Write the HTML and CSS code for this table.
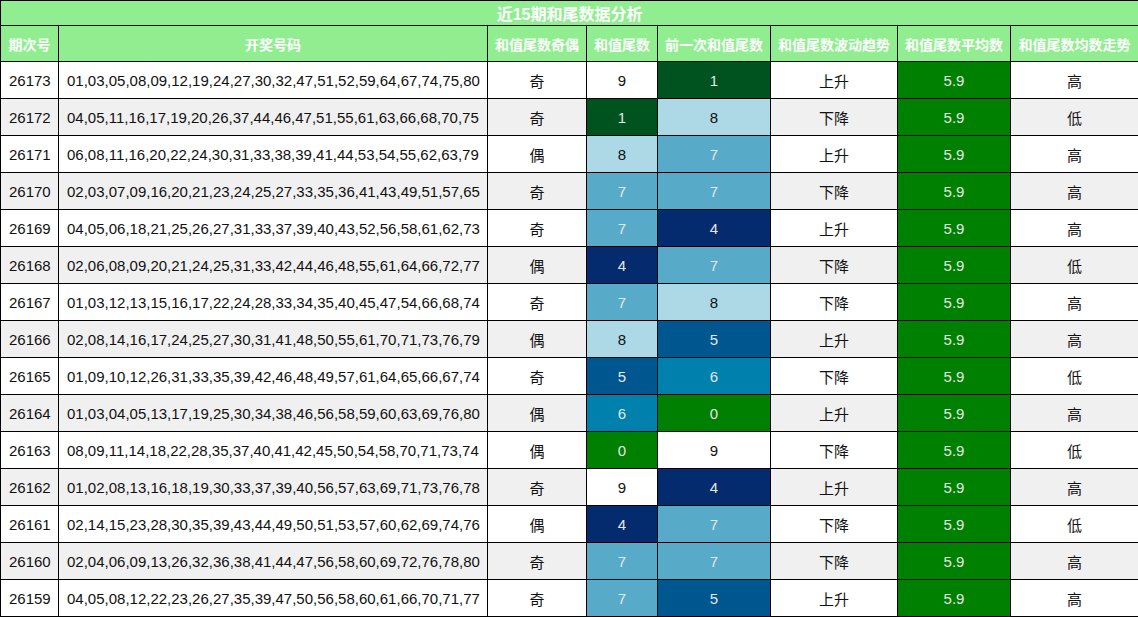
FILE: index.html
```html
<!DOCTYPE html>
<html lang="zh">
<head>
<meta charset="utf-8">
<title>近15期和尾数据分析</title>
<link rel="stylesheet" href="styles.css">
</head>
<body>
<table class="grid">
  <colgroup>
    <col class="c-period"><col class="c-nums"><col class="c-parity"><col class="c-tail"><col class="c-prev"><col class="c-trend"><col class="c-avg"><col class="c-level">
  </colgroup>
  <thead>
    <tr class="title-row"><th colspan="8">近15期和尾数据分析</th></tr>
    <tr class="head-row">
      <th>期次号</th><th>开奖号码</th><th>和值尾数奇偶</th><th>和值尾数</th><th>前一次和值尾数</th><th>和值尾数波动趋势</th><th>和值尾数平均数</th><th>和值尾数均数走势</th>
    </tr>
  </thead>
  <tbody>
    <tr><td class="left">26173</td><td class="left">01,03,05,08,09,12,19,24,27,30,32,47,51,52,59,64,67,74,75,80</td><td>奇</td><td class="d9">9</td><td class="d1">1</td><td>上升</td><td class="avg">5.9</td><td>高</td></tr>
    <tr><td class="left">26172</td><td class="left">04,05,11,16,17,19,20,26,37,44,46,47,51,55,61,63,66,68,70,75</td><td>奇</td><td class="d1">1</td><td class="d8">8</td><td>下降</td><td class="avg">5.9</td><td>低</td></tr>
    <tr><td class="left">26171</td><td class="left">06,08,11,16,20,22,24,30,31,33,38,39,41,44,53,54,55,62,63,79</td><td>偶</td><td class="d8">8</td><td class="d7">7</td><td>上升</td><td class="avg">5.9</td><td>高</td></tr>
    <tr><td class="left">26170</td><td class="left">02,03,07,09,16,20,21,23,24,25,27,33,35,36,41,43,49,51,57,65</td><td>奇</td><td class="d7">7</td><td class="d7">7</td><td>下降</td><td class="avg">5.9</td><td>高</td></tr>
    <tr><td class="left">26169</td><td class="left">04,05,06,18,21,25,26,27,31,33,37,39,40,43,52,56,58,61,62,73</td><td>奇</td><td class="d7">7</td><td class="d4">4</td><td>上升</td><td class="avg">5.9</td><td>高</td></tr>
    <tr><td class="left">26168</td><td class="left">02,06,08,09,20,21,24,25,31,33,42,44,46,48,55,61,64,66,72,77</td><td>偶</td><td class="d4">4</td><td class="d7">7</td><td>下降</td><td class="avg">5.9</td><td>低</td></tr>
    <tr><td class="left">26167</td><td class="left">01,03,12,13,15,16,17,22,24,28,33,34,35,40,45,47,54,66,68,74</td><td>奇</td><td class="d7">7</td><td class="d8">8</td><td>下降</td><td class="avg">5.9</td><td>高</td></tr>
    <tr><td class="left">26166</td><td class="left">02,08,14,16,17,24,25,27,30,31,41,48,50,55,61,70,71,73,76,79</td><td>偶</td><td class="d8">8</td><td class="d5">5</td><td>上升</td><td class="avg">5.9</td><td>高</td></tr>
    <tr><td class="left">26165</td><td class="left">01,09,10,12,26,31,33,35,39,42,46,48,49,57,61,64,65,66,67,74</td><td>奇</td><td class="d5">5</td><td class="d6">6</td><td>下降</td><td class="avg">5.9</td><td>低</td></tr>
    <tr><td class="left">26164</td><td class="left">01,03,04,05,13,17,19,25,30,34,38,46,56,58,59,60,63,69,76,80</td><td>偶</td><td class="d6">6</td><td class="d0">0</td><td>上升</td><td class="avg">5.9</td><td>高</td></tr>
    <tr><td class="left">26163</td><td class="left">08,09,11,14,18,22,28,35,37,40,41,42,45,50,54,58,70,71,73,74</td><td>偶</td><td class="d0">0</td><td class="d9">9</td><td>下降</td><td class="avg">5.9</td><td>低</td></tr>
    <tr><td class="left">26162</td><td class="left">01,02,08,13,16,18,19,30,33,37,39,40,56,57,63,69,71,73,76,78</td><td>奇</td><td class="d9">9</td><td class="d4">4</td><td>上升</td><td class="avg">5.9</td><td>高</td></tr>
    <tr><td class="left">26161</td><td class="left">02,14,15,23,28,30,35,39,43,44,49,50,51,53,57,60,62,69,74,76</td><td>偶</td><td class="d4">4</td><td class="d7">7</td><td>下降</td><td class="avg">5.9</td><td>低</td></tr>
    <tr><td class="left">26160</td><td class="left">02,04,06,09,13,26,32,36,38,41,44,47,56,58,60,69,72,76,78,80</td><td>奇</td><td class="d7">7</td><td class="d7">7</td><td>下降</td><td class="avg">5.9</td><td>高</td></tr>
    <tr><td class="left">26159</td><td class="left">04,05,08,12,22,23,26,27,35,39,47,50,56,58,60,61,66,70,71,77</td><td>奇</td><td class="d7">7</td><td class="d5">5</td><td>上升</td><td class="avg">5.9</td><td>高</td></tr>
  </tbody>
</table>
</body>
</html>
```
FILE: styles.css
```css
html, body {
  margin: 0;
  padding: 0;
  background: #ffffff;
}

.grid {
  width: 1138px;
  border-collapse: collapse;
  table-layout: fixed;
  font-family: "Liberation Sans", Arial, "Noto Sans CJK SC", sans-serif;
  font-size: 15px;
  color: #111111;
}

.c-period { width: 58px; }
.c-nums { width: 429px; }
.c-parity { width: 99px; }
.c-tail { width: 71px; }
.c-prev { width: 113px; }
.c-trend { width: 127px; }
.c-avg { width: 113px; }
.c-level { width: 128px; }

.grid th,
.grid td {
  border: 1px solid #000000;
  padding: 0;
  text-align: center;
  vertical-align: middle;
  overflow: hidden;
  white-space: nowrap;
}

.grid th {
  background: #90ee90;
  color: #ffffff;
  font-weight: bold;
}

.title-row th {
  height: 24px;
  font-size: 16px;
}

.head-row th {
  height: 35px;
  font-size: 14px;
}

.grid td {
  height: 36px;
}

.grid tbody tr:nth-child(even) td {
  background: #f0f0f0;
}

.grid td.left {
  text-align: left;
  padding-left: 8px;
}

.grid tbody tr td.avg { background: #008000; color: #e6e6e6; }
.grid tbody tr td.d0 { background: #008000; color: #e6e6e6; }
.grid tbody tr td.d1 { background: #00521e; color: #e6e6e6; }
.grid tbody tr td.d4 { background: #042b6e; color: #e6e6e6; }
.grid tbody tr td.d5 { background: #00568f; color: #e6e6e6; }
.grid tbody tr td.d6 { background: #0080ad; color: #e6e6e6; }
.grid tbody tr td.d7 { background: #57abc8; color: #e6e6e6; }
.grid tbody tr td.d8 { background: #add8e6; color: #111111; }
.grid tbody tr td.d9 { background: #ffffff; color: #111111; }
```
